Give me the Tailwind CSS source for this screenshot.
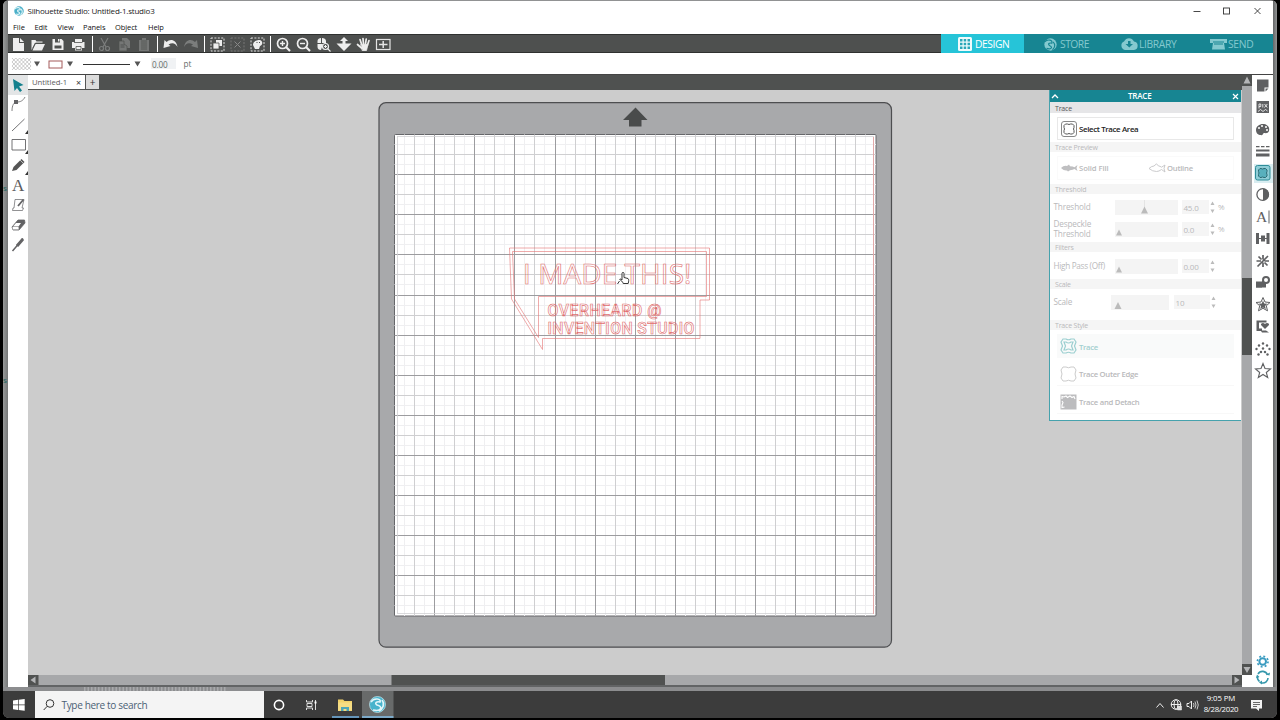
<!DOCTYPE html>
<html lang="en">
<head>
<meta charset="utf-8">
<title>Silhouette Studio: Untitled-1.studio3</title>
<script src="https://cdn.jsdelivr.net/npm/@tailwindcss/browser@4"></script>
</head>
<body class="w-[1280px] h-[720px] overflow-hidden bg-black font-['Open_Sans','Noto_Sans',sans-serif] leading-none">
<div class="flex flex-col w-[1274px] h-[718px] ml-[3px] bg-[#919293] rounded-t-md rounded-b-md overflow-hidden pt-px whitespace-nowrap">
  <!-- application window -->
  <div class="flex h-[686px]">
    <div class="w-[5px] shrink-0 bg-gradient-to-r from-[#989a9a] to-[#767878] text-[8px] text-[#1d6660] overflow-hidden"><div class="h-[183px]"></div><div class="h-[192px]">s</div><div>s</div></div>
    <div class="flex flex-col w-[1265px] h-[686px] bg-white">
      <!-- title -->
      <div class="flex items-center h-[19px] pl-[6px] text-[8px] text-[#222]">
        <svg class="w-[10px] h-[10px] mr-[3.5px]" viewBox="0 0 20 20"><circle cx="10" cy="10" r="9.5" fill="#4aafc8"/><path d="M1 6C6 1 14 3 12 8C8 7 5 9 9 12C14 14 11 18 4 16M14 6C18 10 17 15 13 18" fill="none" stroke="#d9f2f6" stroke-width="2.4"/></svg>
        <span class="tracking-[-0.21px]">Silhouette Studio: Untitled-1.studio3</span>
        <svg class="w-[80px] h-[18px] ml-auto mr-[3px]" viewBox="1190 1 80 18" fill="none" stroke="#333" stroke-width="0.9"><path d="M1193.500 10.500h7M1254.500 7l6 6m0-6l-6 6"/><rect x="1223.500" y="7" width="6" height="6"/></svg>
      </div>
      <!-- menus -->
      <div class="flex items-center h-[14px] pl-[5px] gap-[9px] pt-px text-[7.5px] text-[#111]">
        <span class="w-[12.5px]">File</span><span class="w-[14px] tracking-[-0.1px]">Edit</span><span class="w-[16.5px]">View</span><span class="w-[23px] tracking-[-0.1px]">Panels</span><span class="w-[24px] tracking-[-0.1px]">Object</span><span class="tracking-[-0.1px]">Help</span>
      </div>
      <!-- main toolbar -->
      <div class="flex h-[19px] pt-[0.5px] bg-[#4e504f] border-y border-[#2f3130]">
        <div class="flex w-[85px] h-full border-r border-white">
          <svg class="w-5 h-[17px]" viewBox="0 0 20 17" fill="#eee"><path d="M5 2h6v5h5v8H5zM12 2l4 4h-4z"/></svg>
          <svg class="w-5 h-[17px]" viewBox="0 0 20 17"><path d="M3.500 14V4h4l1 1.500h6V7H7z" fill="#eee"/><path d="M7.500 8h9.500l-3 6.500H4.500z" fill="#eee"/><path d="M4.800 12l2.700-5h8" stroke="#4e504f" fill="none" stroke-width=".8"/></svg>
          <svg class="w-5 h-[17px]" viewBox="0 0 20 17"><path d="M4.500 3h9l2 2v9h-11z" fill="#eee"/><path d="M7 3h5v3.500H7zM6.500 9.500h7v3h-7z" fill="#4e504f"/><path d="M10 3h1.500v2.500H10z" fill="#eee"/></svg>
          <svg class="w-5 h-[17px]" viewBox="0 0 20 17"><path d="M7 3h7v3h2.500v6H14v2.500H7V12H4V6h3z" fill="#eee"/><path d="M6 6.500h8.500M8 10.500h5v3H8z" stroke="#4e504f" stroke-width=".8" fill="none"/></svg>
        </div>
        <div class="flex w-[65px] h-full pl-px border-r border-white">
          <svg class="w-5 h-[17px]" viewBox="0 0 20 17" fill="none" stroke="#7b7d7c" stroke-width="1.2"><path d="M7 2l5 9M14 2L9 11"/><circle cx="7.500" cy="12.500" r="2"/><circle cx="13.500" cy="12.500" r="2"/></svg>
          <svg class="w-5 h-[17px]" viewBox="0 0 20 17" fill="#757776"><path d="M8 2h5l3 3v7H8z"/><path d="M5 5h5v3l3 2v5H5z" stroke="#4e504f" stroke-width=".7"/><path d="M6.500 9h4m-4 2h4" stroke="#4e504f"/></svg>
          <svg class="w-5 h-[17px]" viewBox="0 0 20 17"><path d="M5 4h10v11H5zM8 2h4v3H8z" fill="#757776"/><path d="M7 7h6m-6 2h6m-6 2h6m-6 2h6M7 5h6" stroke="#4e504f" stroke-width=".8"/></svg>
        </div>
        <div class="flex w-[47px] h-full pl-[2px] border-r border-white">
          <svg class="w-[21px] h-[17px]" viewBox="0 0 20 17"><path d="M4 4l-1 8 7-2-2-1.500C12 6 15 7 17 11 16 4 10 2 6 6z" fill="#eee"/></svg>
          <svg class="w-5 h-[17px]" viewBox="0 0 20 17"><path d="M16 4l1 8-7-2 2-1.500C8 6 5 7 3 11 4 4 10 2 14 6z" fill="#7b7d7c"/></svg>
        </div>
        <div class="flex w-[66px] h-full pl-[2px] border-r border-white">
          <svg class="w-5 h-[17px]" viewBox="0 0 20 17"><rect x="4" y="2" width="13" height="13" fill="none" stroke="#ddd" stroke-dasharray="2 1.400"/><path d="M9 4h6v6H9z" fill="#eee"/><path d="M6 7h6v6H6z" fill="#eee" stroke="#4e504f" stroke-width=".8"/></svg>
          <svg class="w-5 h-[17px]" viewBox="0 0 20 17"><rect x="4" y="2" width="13" height="13" fill="none" stroke="#777" stroke-dasharray="2 1.400"/><path d="M7.500 5.500l6 6m0-6l-6 6" stroke="#888"/></svg>
          <svg class="w-5 h-[17px]" viewBox="0 0 20 17"><rect x="4" y="2" width="13" height="13" fill="none" stroke="#ddd" stroke-dasharray="2 1.400"/><path d="M6 9C6 5 10 4 13 4c3 1 3 5 0 6l-1 3H8z" fill="#eee"/><path d="M9.500 6.500h1M12 6.500h1" stroke="#4e504f"/></svg>
        </div>
        <div class="flex pl-[2px]">
          <svg class="w-5 h-[17px]" viewBox="0 0 20 17" fill="none" stroke="#eee" stroke-width="1.700"><circle cx="9.500" cy="7.500" r="5"/><path d="M13 11l4 4" stroke-width="2.200"/><path d="M7 7.500h5M9.500 5v5" stroke-width="1.400"/></svg>
          <svg class="w-5 h-[17px]" viewBox="0 0 20 17" fill="none" stroke="#eee" stroke-width="1.700"><circle cx="9.500" cy="7.500" r="5"/><path d="M13 11l4 4" stroke-width="2.200"/><path d="M7 7.500h5" stroke-width="1.400"/></svg>
          <svg class="w-5 h-[17px]" viewBox="0 0 20 17"><path d="M4.500 7V5c0-2 2-3 3.500-3v5zM9 2c2 0 4 1 4 3v2H9zM4.500 8H10l-2 6c-2 0-3.500-1-3.500-3z" fill="#eee"/><circle cx="12.500" cy="10.500" r="3" fill="#4e504f" stroke="#eee" stroke-width="1.200"/><path d="M14.500 12.500l3 3M11 10.500h3M12.500 9v3" stroke="#eee" stroke-width="1.100"/></svg>
          <svg class="w-5 h-[17px]" viewBox="0 0 20 17" fill="#eee"><path d="M11 1l4 4h-2.500v2.500h6L11 15 3.500 7.500h6V5H7z"/></svg>
          <svg class="w-5 h-[17px]" viewBox="0 0 20 17" fill="none" stroke="#eee" stroke-width="1.700" stroke-linecap="round"><path d="M8.500 8L7 3.500M10.500 8L10 2.500M12.500 8l.7-5M14.500 9l1.500-4.500M8.500 12L4.500 8.500"/><path d="M8 8.500h7l-1.500 6H9.500z" fill="#eee" stroke-width=".8"/></svg>
          <svg class="w-5 h-[17px]" viewBox="0 0 20 17" fill="none" stroke="#e4e4e4"><rect x="3.500" y="3.500" width="13.500" height="10" stroke-width="1.200"/><path d="M6 8.500h8.500M10.200 5v7" stroke-width="1.500"/></svg>
        </div>
        <div class="flex items-center ml-auto -mt-[1.5px] h-[19px] pt-[1px] w-[332px] bg-[#178592] text-[10.3px] text-[#84c9cf]">
          <div class="flex items-center w-[83px] h-[19px] -mt-px pt-px pl-[17px] gap-[3px] bg-[#26c4d8] text-white">
            <svg class="w-[14px] h-[14px]" viewBox="0 0 14 14"><rect width="14" height="14" rx="1.500" fill="#f0fbfc"/><path d="M2 2h2.500v2.500H2zM5.700 2h2.500v2.500H5.700zM9.500 2H12v2.500H9.500zM2 5.700h2.500v2.500H2zM5.700 5.700h2.500v2.500H5.700zM9.500 5.700H12v2.500H9.500zM2 9.500h2.500V12H2zM5.700 9.500h2.500V12H5.700zM9.500 9.500H12V12H9.500z" fill="#2aa7b8"/></svg>
            <span class="tracking-[-0.45px]">DESIGN</span>
          </div>
          <div class="flex items-center w-[76px] pl-[20px] gap-[3px]">
            <svg class="w-[13px] h-[13px]" viewBox="0 0 20 20"><circle cx="10" cy="10" r="9.500" fill="#84c9cf"/><path d="M1 6C6 1 14 3 12 8C8 7 5 9 9 12C14 14 11 18 4 16M14 6C18 10 17 15 13 18" fill="none" stroke="#178592" stroke-width="1.800"/></svg>
            <span class="tracking-[-0.5px]">STORE</span>
          </div>
          <div class="flex items-center w-[89px] pl-[20px]">
            <svg class="w-[19px] h-[14px]" viewBox="0 0 19 14"><path d="M5 13a4.500 4.500 0 0 1-1-8.500C6 0 12 0 14 4.500a4.300 4.300 0 0 1 0 8.500z" fill="#84c9cf"/><path d="M8 4h2.500v3H13l-3.700 3.500L5.500 7H8z" fill="#178592"/></svg>
            <span class="tracking-[-0.35px]">LIBRARY</span>
          </div>
          <div class="flex items-center pl-[20px]">
            <svg class="w-[19px] h-[12px]" viewBox="0 0 19 12"><path d="M1 1h17v4h-3l1 6.500H3L4 5H1z" fill="#84c9cf"/><path d="M4 4h11M5 6h9" stroke="#178592"/></svg>
            <span class="tracking-[-0.3px]">SEND</span>
          </div>
        </div>
      </div>
      <!-- line style bar -->
      <div class="flex items-center h-[21px] text-[8.2px] text-[#656d6b]">
        <svg class="w-[140px] h-[20px]" viewBox="8 54 140 20"><path id="chk" d="" stroke="#aaa" stroke-width=".6" fill="none"/><path d="M34 61.500h6l-3 5zM67 61.500h6l-3 5zM134.500 61.500h6l-3 5z" fill="#555"/><rect x="49" y="61" width="13" height="7" fill="#fff" stroke="#a45a5a"/><path d="M83 64.500h47" stroke="#333"/></svg>
        <div class="w-[25px] h-[11px] pt-[2.5px] ml-[3px] pl-[1px] bg-[#f0f2f4] tracking-[-0.2px]">0.00</div>
        <span class="ml-[7.5px] pt-px">pt</span>
      </div>
      <div class="flex h-[613px] border-t border-[#444]">
        <!-- drawing tools -->
        <svg class="w-[20px] h-[611px] shrink-0" viewBox="8 75 20 611" fill="none" stroke="#636365">
          <path d="M8 75h20v20H8z" fill="#e3e5e6" stroke="none"/><path d="M13 79l10.500 6-4.500 1.500 3 4-2 1.500-3-4-2.500 3z" fill="#13808d" stroke="none"/>
          <path d="M12 111c0-6 2-9 5-9s6-1 8-5" stroke-width=".8"/><path d="M14 100h4v4h-4z" fill="#636365" stroke="none"/>
          <path d="M12 131l12.500-12M12 139.500h13.500v10.500H12z" stroke-width=".9"/>
          <path d="M28 130v4h-3zM28 150v4h-3zM28 171v4h-3z" fill="#333" stroke="none"/>
          <path d="M12 171l1.500-4 8-8 3 3-8 8z" fill="#555" stroke="none"/><path d="M20 160l3 3" stroke="#fff" stroke-width=".6"/>
          <text x="12" y="191" font-family="Liberation Serif, serif" font-size="17" fill="#5a5a5c" stroke="none">A</text>
          <path d="M15 199.500h9l-2 8.500h1.500l-1 2.500H12.500l.5-2.500h1z" stroke-width=".7"/><path d="M18 206l5.500-6.500" stroke-width="1.800"/>
          <path d="M12 227l6-7h6.500l.5 3-6 7h-6z" fill="#636365" stroke-width=".8"/><path d="M12.500 227h6l.3 2.500h-6zM13 226.500l3-3.500h5l-2.500 3.500z" fill="#fff" stroke="none"/>
          <path d="M12.500 251l6-7M18 245l5-6.500" stroke-width="1.500"/><path d="M17 246l6-7" stroke-width="3"/>
        </svg>
        <!-- document column -->
        <div class="relative flex flex-col w-[1214px] shrink-0">
          <div class="flex items-start h-[15px] bg-[#4f5150] text-[7.7px] text-[#5c5c5c]">
            <div class="flex items-center w-[58px] h-[14px] pl-[4px] pt-px bg-white border-r border-[#555]"><span class="tracking-[-0.05px]">Untitled-1</span><span class="ml-[9px] text-[9px] text-[#333]">×</span></div>
            <div class="flex items-center justify-center w-[13px] h-[14px] bg-[#dcdcdc] text-[10px] text-[#333]">+</div>
          </div>
          <svg class="w-[1214px] h-[585px]" viewBox="28 90 1214 585" fill="none">
            <path d="M28 90h1214v585H28z" fill="#cccccc"/>
            <rect x="379" y="102.700" width="512.500" height="544.500" rx="7" fill="#a8a9ab" stroke="#4d4e50" stroke-width="1.200"/>
            <path d="M635.500 107.500l12 12.500h-6v6.500h-12.500V120h-6z" fill="#494b4b"/>
            <rect x="394.500" y="134.500" width="481.500" height="481.500" rx="1" fill="#fff" stroke="#66676a"/>
            <g id="grid"></g>
            <rect x="397.500" y="136.500" width="476" height="477" stroke="#d2d2d4" stroke-width=".8"/>
            <path d="M873.500 137v477" stroke="#e2a9a9"/>
            <g stroke="#e57373" stroke-width=".75" stroke-opacity=".8">
              <path d="M509.500 248h200v52h-9.500v38.500H542.500v11L511.500 299z"/>
              <path d="M512.500 251.500h194v45h-168v41L514.500 299z"/>
            </g>
            <g stroke="#e06464" opacity=".92">
              <text x="523" y="284" textLength="168.500" lengthAdjust="spacing" font-family="Open Sans, sans-serif" font-size="28" font-weight="400" stroke-width=".6">I MADE THIS!</text>
              <text x="547.500" y="315.500" textLength="114" font-family="Roboto, sans-serif" font-size="15.800" font-weight="500" stroke-width=".6">OVERHEARD @</text>
              <text x="547.500" y="333.500" textLength="147" font-family="Roboto, sans-serif" font-size="15.800" font-weight="500" stroke-width=".6">INVENTION STUDIO</text>
            </g>
            <path d="M622 280v-6.500c0-1.500 2-1.500 2 0v4l4 1c1 .5.800 3 .2 5h-5c-.5-2-2-3-3.500-4 .5-1 1.500-.5 2.300.5zM617.500 284l2-3" fill="#fff" stroke="#222" stroke-width=".9"/>
          </svg>
          <svg class="w-[1214px] h-[12px]" viewBox="28 675 1214 12"><path d="M28 675h1214v12H28z" fill="#a7a8aa"/><path d="M28 675h10.500v10H28zM391.500 675H665v10H391.500zM1232 675h10v10h-10z" fill="#505251"/><path d="M35.500 676.500v7l-5-3.500zM1234.500 676.500v7l5-3.500z" fill="#b4b5b7"/><path d="M28 685h1214v2H28z" fill="#626465"/></svg>

          <!-- floating trace panel -->
          <div class="absolute left-[1021px] top-[15px] w-[192px] h-[331px] bg-white border-l border-b border-[#46a2ad] text-[8px] text-[#b9b9bb]">
            <div class="flex items-center h-[12px] pl-[1px] pr-[1px] bg-[#178592] text-white text-[8px]"><svg class="w-[8px] h-[6px]" viewBox="0 0 8 6"><path d="M1 5l3-3 3 3" stroke="#fff" stroke-width="1.300" fill="none"/></svg><span class="ml-[69px] tracking-[-0.2px] font-semibold">TRACE</span><svg class="w-[7px] h-[7px] ml-auto mr-px" viewBox="0 0 7 7"><path d="M1 1l5 5m0-5L1 6" stroke="#fff" stroke-width="1.200"/></svg></div>
            <div class="h-[11px] pt-[2.5px] pl-[5px] bg-[#e6e6e8] text-[7px] tracking-[-0.2px] text-[#555]">Trace</div>
            <div class="flex items-center h-[23px] w-[177px] mt-[4px] ml-[7px] pl-[3px] border border-[#e8e8e8] text-[7.9px] font-semibold text-[#222]"><svg class="w-[16px] h-[16px] mr-[2px]" viewBox="0 0 16 16" fill="none" stroke="#555"><rect x=".5" y=".5" width="15" height="15" rx="2.500" stroke="#888"/><path d="M4.500 3h2q1.500 1 3 0h2L13 4.500v2q-1 1.500 0 3v2L11.500 13h-2q-1.500-1-3 0h-2L3 11.500v-2q1-1.500 0-3v-2z"/></svg><span class="tracking-[-0.36px] pt-[3px]">Select Trace Area</span></div>
            <div class="h-[10px] mt-[2px] pt-[1.5px] pl-[5px] bg-[#f5f5f5] text-[7px] tracking-[-0.2px]">Trace Preview</div>
            <div class="flex items-center h-[24px] w-[177px] mt-[4px] mb-[4px] ml-[7px] pl-[3px] border border-[#fafafa] font-semibold text-[7.7px]">
              <svg class="w-[17px] h-[10px] mr-[1px]" viewBox="0 0 17 10"><path d="M0 5Q3 2 6 3L8 1.500l1 1.700q3 0 4.500 1L16.500 2l-1 3 1 3-3-2Q12 7 9 7.300L7 8.500l-1-1Q3 8 0 5z" fill="#bfbfc1"/></svg><span class="w-[69px] pt-[2px] tracking-[-0.1px]">Solid Fill</span>
              <svg class="w-[18px] h-[10px] mr-[1px]" viewBox="0 0 17 10"><path d="M.5 5.500Q3 3 5.500 3L8 .8 10 3q1.500 0 3 1.200L16.500 2l-1 3.500 1 3.500L13 6.500Q10.500 8.500 8 8.500 4 8.500.5 5.500z" fill="none" stroke="#c4c4c6" stroke-width=".9"/></svg><span class="pt-[2px] tracking-[-0.25px]">Outline</span>
            </div>
            <div class="h-[10px] pt-[1.5px] pl-[5px] bg-[#f5f5f5] text-[7px] tracking-[-0.15px]">Threshold</div>
            <div class="flex items-center h-[14px] mt-[6px] pl-[3.5px]"><span class="w-[61px] pt-px text-[8.2px] tracking-[-0.15px]">Threshold</span><svg class="w-[63px] h-[15px] mr-[4px]" viewBox="0 0 63 15"><path d="M0 0h63v15H0z" fill="#f4f4f4"/><path d="M29.500 0v10" stroke="#e4e4e4"/><path d="M26 13.500l3.500-7 3.500 7z" fill="#bbb"/></svg><span class="w-[27px] h-[14px] pt-[4px] pl-[2px] bg-[#f5f5f5] tracking-[-0.2px]">45.0</span><svg class="w-[5px] h-[12px] mx-[1px]" viewBox="0 0 5 12"><path d="M.5 4l2-3.500 2 3.500zM.5 8.500l2 3.500 2-3.500z" fill="#bbb"/></svg><span class="ml-[2.500px]">%</span></div>
            <div class="flex items-center h-[20px] mt-[5px] mb-[3px] pl-[3.5px]"><span class="w-[61px] text-[8.2px] tracking-[-0.15px] leading-[10px]">Despeckle<br>Threshold</span><svg class="w-[63px] h-[15px] mr-[4px]" viewBox="0 0 63 15"><path d="M0 0h63v15H0z" fill="#f4f4f4"/><path d="M1 13.500l3-6 3 6z" fill="#bbb"/></svg><span class="w-[27px] h-[14px] pt-[4px] pl-[2px] bg-[#f5f5f5] tracking-[-0.2px]">0.0</span><svg class="w-[5px] h-[12px] mx-[1px]" viewBox="0 0 5 12"><path d="M.5 4l2-3.500 2 3.500zM.5 8.500l2 3.500 2-3.500z" fill="#bbb"/></svg><span class="ml-[2.500px]">%</span></div>
            <div class="h-[10px] pt-[1.5px] pl-[5px] bg-[#f5f5f5] text-[7px] tracking-[-0.15px]">Filters</div>
            <div class="flex items-center h-[14px] mt-[7px] mb-[6px] pl-[3.5px]"><span class="w-[61px] text-[8.2px] tracking-[-0.3px]">High Pass (Off)</span><svg class="w-[63px] h-[15px] mr-[4px]" viewBox="0 0 63 15"><path d="M0 0h63v15H0z" fill="#f4f4f4"/><path d="M1 13.500l3-6 3 6z" fill="#bbb"/></svg><span class="w-[27px] h-[14px] pt-[4px] pl-[2px] bg-[#f5f5f5] tracking-[-0.2px]">0.00</span><svg class="w-[5px] h-[12px] mx-[1px]" viewBox="0 0 5 12"><path d="M.5 4l2-3.500 2 3.500zM.5 8.500l2 3.500 2-3.500z" fill="#bbb"/></svg></div>
            <div class="h-[10px] pt-[1.5px] pl-[5px] bg-[#f5f5f5] text-[7px] tracking-[-0.2px]">Scale</div>
            <div class="flex items-center h-[14px] mt-[6px] mb-[11px] pl-[3.5px]"><span class="w-[57px] pt-px text-[8.2px] tracking-[-0.2px]">Scale</span><svg class="w-[58px] h-[15px] mr-[5px]" viewBox="0 0 58 15"><path d="M0 0h58v15H0z" fill="#f4f4f4"/><path d="M3.500 14l3.500-7 3.500 7z" fill="#bbb"/></svg><span class="w-[36px] h-[14px] pt-[4px] pl-[2px] bg-[#f5f5f5]">10</span><svg class="w-[5px] h-[12px] ml-[1px]" viewBox="0 0 5 12"><path d="M.5 4l2-3.500 2 3.500zM.5 8.500l2 3.500 2-3.500z" fill="#bbb"/></svg></div>
            <div class="h-[10px] pt-[1.5px] pl-[5px] bg-[#f5f5f5] text-[7px] tracking-[-0.2px]">Trace Style</div>
            <div class="flex flex-col gap-[4px] w-[177px] mt-[4px] ml-[7px] text-[7.7px] tracking-[-0.3px] font-semibold">
              <div class="flex items-center h-[24px] pl-[3px] bg-[#f9fafa] text-[#a3cfcf]"><svg class="w-[17px] h-[16px] mr-[2px]" viewBox="0 0 17 16" fill="none" stroke="#9ccfd0" stroke-width="1.200"><path d="M3 1h3q2.500 1.500 5 0h3l2 3-1.500 4L16 12l-2 3h-3q-2.500-1.500-5 0H3l-2-3 1.500-4L1 4z"/><path d="M4 4h2q2.500 2 5 0h2l-1.500 4L13 12h-2q-2.500-2-5 0H4l1.500-4z"/></svg><span class="pt-[3px]">Trace</span></div>
              <div class="flex items-center h-[24px] pl-[3px] border-b border-[#f8f8f8]"><svg class="w-[17px] h-[16px] mr-[2px]" viewBox="0 0 17 16" fill="none" stroke="#ccc"><path d="M3 1h3q2.500 1.500 5 0h3l2 3-1 4 1 4-2 3h-3q-2.500-1.500-5 0H3l-2-3 1-4-1-4z"/></svg><span class="pt-[3px]">Trace Outer Edge</span></div>
              <div class="flex items-center h-[24px] pl-[3px] border-b border-[#f8f8f8]"><svg class="w-[17px] h-[16px] mr-[2px]" viewBox="0 0 17 16"><path d="M.5.5h16v15H.5z" fill="#bcbcbe"/><path d="M2 5V2.500l2 .5 2-1 1.500 1.500L10 2l2 1.500 2-1L15 5M2 7l1 1.500L2 11v2.500l2.500-.5" stroke="#fff" stroke-width="1.100" fill="none"/></svg><span class="pt-[3px] tracking-[-0.27px]">Trace and Detach</span></div>
            </div>
          </div>
        </div>
        <svg class="w-[10px] h-[612px] shrink-0" viewBox="1242 75 10 612"><path d="M1242 75h10v600h-10z" fill="#a7a8aa"/><path d="M1242 75h10v11h-10zM1242 278h10v77h-10zM1242 664h10v11h-10z" fill="#505251"/><path d="M1243.500 83.500h7l-3.500-7zM1243.500 667h7l-3.500 6z" fill="#b4b5b7"/></svg>
        <!-- panel icons -->
        <svg class="w-[21px] h-[611px] shrink-0" viewBox="1252 75 21 611" fill="#5f6062">
          <path d="M1257 79.500h11.500v8h-4v4h-7.500zM1265.500 88.500h3l-3 3z"/>
          <path d="M1256.500 101h12.500v12h-12.500z"/><path d="M1259 108.500v-4.500h1.800v2.500h-1.800M1262.800 104v3.500m1.700-3.500l2.800 3.500m0-3.500l-2.800 3.500M1258 111.500l2.500-2 2.500 2 2.500-2 2 1.500" stroke="#fff" stroke-width=".8" fill="none"/>
          <path d="M1256 130c0-4 4-6.500 8-6s6 4 5 7-4 2-5 2-1 3-3 2c-3 0-5-2-5-5z"/><g fill="#fff"><circle cx="1259" cy="128" r="1"/><circle cx="1262" cy="126" r="1"/><circle cx="1266" cy="127" r="1"/><circle cx="1267" cy="130" r="1"/></g>
          <path d="M1256 146h3.500v1.200h-3.500zM1261 146h3.500v1.200h-3.500zM1266 146h3.500v1.200h-3.500zM1256 149.500h13.500v2h-13.500zM1256 153.500h13.500v3h-13.500z"/>
          <path d="M1254 164h19v19h-19z" fill="#d9edf1"/><rect x="1255.500" y="165.500" width="14.500" height="14.500" rx="2" fill="#8fcdd6" stroke="#2f8d99"/><path d="M1260 168.500h1q1.500 1 3 0h1.500l1.500 1.500v1.500q-1 1.500 0 3v1.500l-1.500 1.500h-1.500q-1.500-1-3 0h-1l-1.500-1.500v-1.500q1-1.500 0-3v-1.500z" fill="#58b0bd" stroke="#2d6b75"/>
          <circle cx="1262.700" cy="194.500" r="5.800" fill="#fff" stroke="#5f6062" stroke-width="1.300"/><path d="M1263 188.500a6 6 0 0 1 0 12z"/>
          <text x="1256" y="222" font-family="Liberation Serif, serif" font-size="15.500">A</text><path d="M1268.500 210.500h1v13h-1z"/>
          <path d="M1256 233h3v11h-3zM1266.500 233h3v11h-3zM1261 235.500h4v6h-4zM1256 238h13v1h-13z"/>
          <path d="M1263 255v4.500m0 3v4.500M1256.500 261h4.500m3.500 0h4.500M1258.500 256.500l3 3m3 3l3 3M1268 256l-10.500 10.500" stroke="#5f6062" stroke-width="1.700"/>
          <path d="M1256 282h6v-1h4v6.500h-10z"/><circle cx="1266" cy="280" r="3" fill="#fff" stroke="#5f6062" stroke-width="2"/><path d="M1256 281.500h6v6h-6z"/>
          <path d="M1263 297.500l2 4.500 5 .5-3.700 3.300 1.200 5-4.500-2.500-4.500 2.500 1.200-5-3.700-3.300 5-.5z" fill="#fff" stroke="#5f6062"/><path d="M1263 300.500l1.200 3 3.300.3-2.500 2.200.8 3-2.800-1.500-2.800 1.500.8-3-2.500-2.200 3.300-.3z"/>
          <path d="M1256.500 320.500h10v2h-7.500v6h3v2h4l3 2h-7l-1-1.500h-4.500z"/><path d="M1265 329l-4-4c-.5-2 2.500-3 4-1 1.500-2 4.500-1 4 1z"/>
          <g><circle cx="1263" cy="343.500" r="1.200"/><circle cx="1259" cy="345.500" r="1.200"/><circle cx="1267" cy="345.500" r="1.200"/><circle cx="1256.500" cy="349" r="1.200"/><circle cx="1269.500" cy="349" r="1.200"/><circle cx="1263" cy="348.500" r="1.200"/><circle cx="1261" cy="352" r="1.200"/><circle cx="1265" cy="352" r="1.200"/><circle cx="1258.500" cy="354.500" r="1.200"/><circle cx="1267.500" cy="354.500" r="1.200"/></g>
          <path d="M1263 363.500l2 5 5.500.5-4.200 3.500 1.400 5-4.700-3-4.700 3 1.400-5-4.200-3.500 5.500-.5z" fill="#fff" stroke="#5f6062" stroke-width="1.100"/>
          <circle cx="1262.700" cy="661.500" r="3.300" fill="none" stroke="#3a9bc0" stroke-width="2"/><circle cx="1262.700" cy="661.500" r="5.300" fill="none" stroke="#3a9bc0" stroke-width="1.700" stroke-dasharray="1.900 2.262"/>
          <path d="M1258 674a5.200 5.200 0 0 1 9.500 1M1268 678a5.200 5.200 0 0 1-6 5M1259.500 681.500a5.200 5.200 0 0 1-2-5" fill="none" stroke="#3597ab" stroke-width="1.600"/><path d="M1266 674.500l3.500 1 .5-3zM1262 680.500v4l-3-2zM1256 678l1-3.500 2.500 2.500z" fill="#3597ab"/>
        </svg>
      </div>
    </div>
    <div class="w-[4px] shrink-0 bg-gradient-to-r from-[#656768] to-[#929495]"></div>
  </div>
  <svg class="w-[1274px] h-[4px] shrink-0" viewBox="3 687 1274 4"><path d="M3 687h1274v4H3z" fill="#8c8d8f"/><path d="M84 689h142" stroke="#a8a9ab" stroke-width="4" stroke-dasharray="1.500 2"/></svg>
  <!-- taskbar -->
  <div class="flex items-stretch h-[27px] shrink-0 bg-[#3c3c3c]">
    <svg class="w-[32px] h-[27px]" viewBox="3 691 32 27" fill="#fff"><path d="M13 700.500l5-.7v4.700h-5zM18.700 699.700l6-.8v5.600h-6zM13 705.200h5v4.700l-5-.7zM18.700 705.200h6v5.600l-6-.8z"/></svg>
    <div class="flex items-center w-[229px] pl-[8px] bg-[#f4f4f4] text-[10px] text-[#4b6074]"><svg class="w-[12px] h-[12px] mr-[6.5px]" viewBox="0 0 12 12" fill="none" stroke="#333"><circle cx="7" cy="4.500" r="3.800"/><path d="M4.200 7.300L.7 11"/></svg><span class="pt-px tracking-[-0.33px]">Type here to search</span></div>
    <svg class="w-[130px] h-[27px]" viewBox="264 691 130 27" fill="none"><circle cx="279" cy="705" r="4.600" stroke="#fff" stroke-width="1.600"/><path d="M306.500 700v2h6v-2M306.500 710v-2h6v2M307 703.500h5v3h-5zM315.500 700v10" stroke="#ddd"/><path d="M314.500 701.500h2v2h-2z" fill="#fff"/>
      <path d="M338 699.500h5l1.500 1.500h7.500v10h-14z" fill="#f3d36b"/><path d="M338 702.500h14v8h-14z" fill="#f6dd84"/><path d="M341 711v-4h8v4h-2.500v-2h-3v2z" fill="#4fa6b8"/><path d="M332 717h27" stroke="#75b5e5" stroke-width="1.500"/>
      <path d="M362 691h31.500v27H362z" fill="#686a6a"/><path d="M362 717h31.500" stroke="#85c0ea" stroke-width="1.500"/><circle cx="377.500" cy="704.500" r="8" fill="#48b3cc" stroke="#c9e9f0" stroke-width=".7"/><path d="M371 702c3-5 11-3 9 0-3-1-6 1-3 3 6 1 5 7-4 5M382 700c3 4 1 9-3 11" stroke="#e3f6fa" stroke-width="1.600"/></svg>
    <div class="flex items-center ml-auto text-[#fff] text-[7.8px]">
      <svg class="w-[48px] h-[27px]" viewBox="1153 691 48 27" fill="none" stroke="#eee"><path d="M1156.500 707.500l3.500-4 3.500 4"/><circle cx="1176" cy="704.500" r="4.800"/><ellipse cx="1176" cy="704.500" rx="2" ry="4.800"/><path d="M1171 704.500h10"/><path d="M1177.500 706h4v4h-4z" fill="#ddd" stroke-width=".5"/><path d="M1187 703.500h2l2.500-2.500v8l-2.500-2.500h-2z"/><path d="M1193.500 703q1 2 0 4M1195 701.500q2 3.500 0 7M1197 700.500q2.500 4.500 0 9" stroke-width=".8"/></svg>
      <div class="flex flex-col items-center gap-[3px] w-[40px]"><span class="tracking-[-0.1px]">9:05 PM</span><span class="tracking-[-0.25px]">8/28/2020</span></div>
      <svg class="w-[36px] h-[27px]" viewBox="1241 691 36 27"><path d="M1251 700h11v8.500h-3V711l-3-2.500h-5z" fill="#f2f2f2"/><path d="M1253 702.500h7m-7 2h7m-7 2h4" stroke="#444" stroke-width=".8"/></svg>
    </div>
  </div>
</div>
<script>
  // Cutting-mat grid: quarter-inch, half-inch and inch lines
  const left = 394.5, top_ = 134.5, size = 481.5, step = size / 48;
  const tiers = { q: '', h: '', m: '' };
  for (let i = 1; i < 48; i++) {
    const t = i % 4 === 0 ? 'm' : i % 2 === 0 ? 'h' : 'q';
    const x = Math.floor(left + i * step) + 0.5, y = Math.floor(top_ + i * step) + 0.5;
    tiers[t] += `M${x} ${top_}v${size}M${left} ${y}h${size}`;
  }
  document.getElementById('grid').innerHTML =
    `<path d="${tiers.q}" stroke="#efeff1"/><path d="${tiers.h}" stroke="#cfcfd1"/><path d="${tiers.m}" stroke="#9c9c9f"/>`;
  // Empty fill swatch hatch
  let hatch = '';
  for (let x = 12; x < 31; x += 3.8) for (let y = 58; y < 70; y += 4) hatch += `M${x} ${y}l3.8 4m0-4l-3.8 4`;
  document.getElementById('chk').setAttribute('d', hatch);
</script>
</body>
</html>
